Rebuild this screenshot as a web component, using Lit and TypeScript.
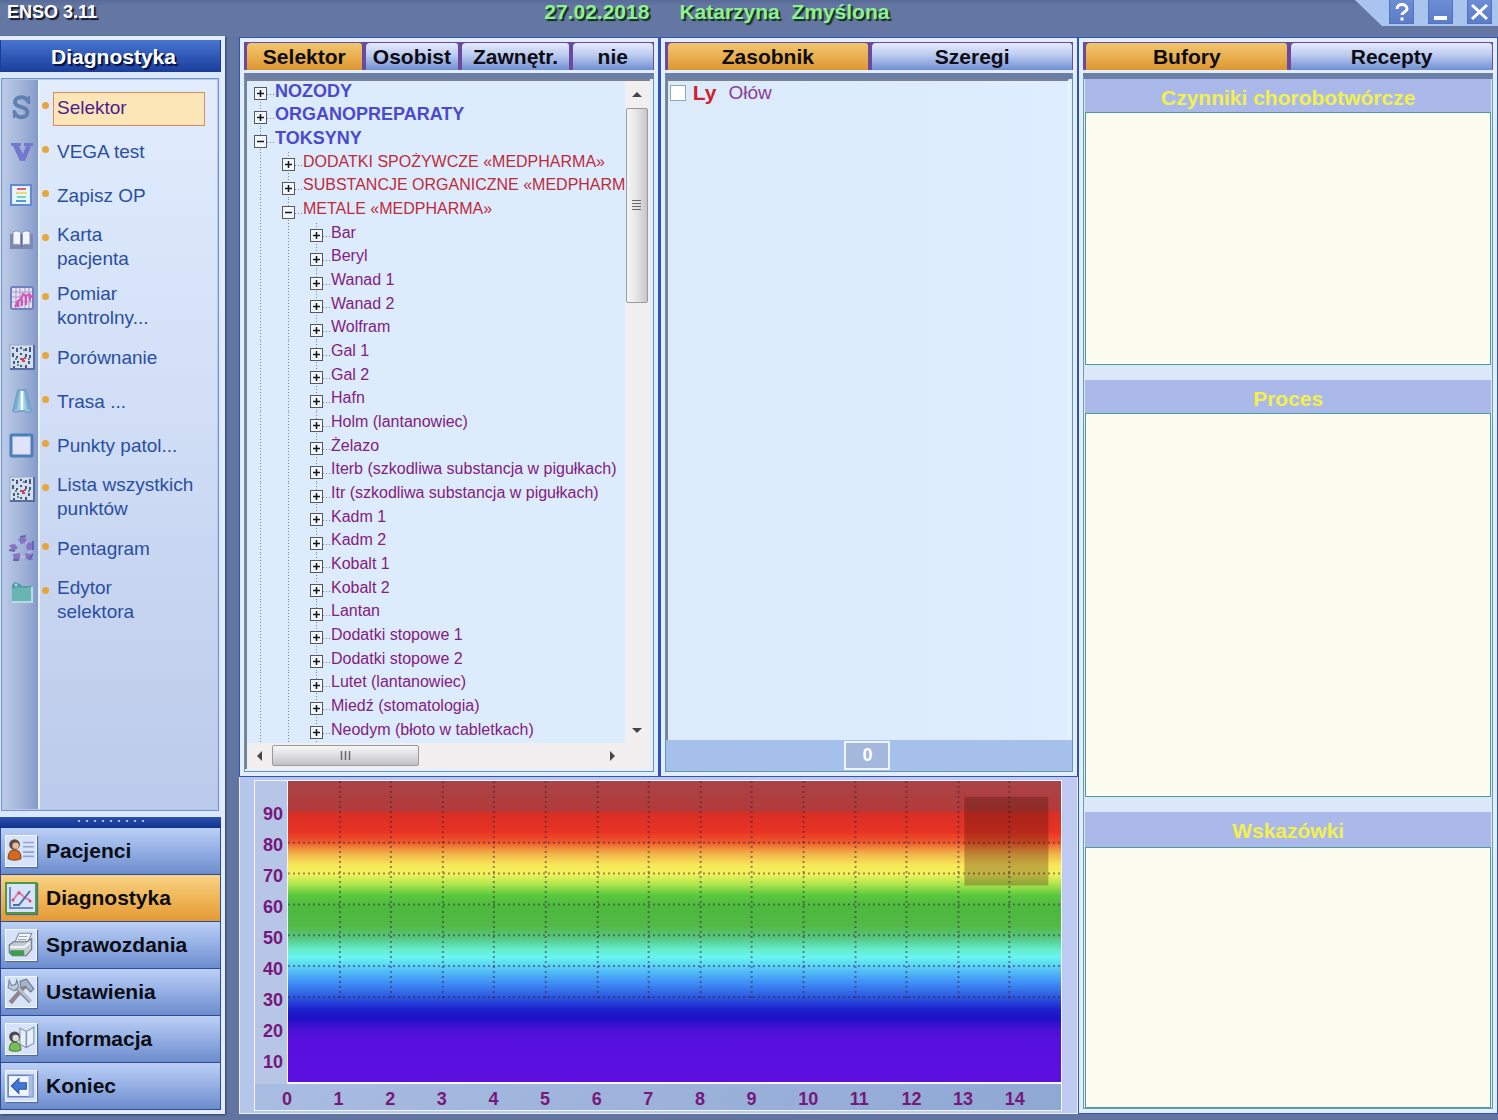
import { LitElement, html, svg, css, nothing } from "lit";
import { customElement, state } from "lit/decorators.js";
import { classMap } from "lit/directives/class-map.js";

/* ---------- icons ---------- */

const dotsIcon = svg`
  <rect x="1" y="1" width="24" height="24" fill="#d3dff0" stroke="#9aaac8"/>
  <path d="M1 25H25V1" fill="none" stroke="#566da0" stroke-width="2"/>
  <path d="M4 3v2M8 4v4M12 3v2M17 4v3M21 3v5M4 9v4M8 12v2M12 9v2M17 10v3M21 11v3M5 17v3M9 17v2M20 17v3M12 21v2M17 21v3M5 22v2" fill="none" stroke="#4a567a" stroke-width="2"/>
  <path d="M11 15h4M13 17h3M15 14h2" stroke="#c04860" stroke-width="2"/>
  <path d="M6 15h2M19 15h2M8 21h2M14 6h2" stroke="#5f8f83" stroke-width="2"/>`;

const toolIcons: Record<string, unknown> = {
  s: svg`<path d="M20 9C18.500 5 16 3.200 12.500 3.200 8.500 3.200 6 5.200 6 8c0 3 2.500 4 6.200 5 3.800 1 6.300 2.200 6.300 5.300 0 3-2.600 4.900-6.200 4.900-3.600 0-6-2-7.300-6.200" fill="none" stroke="#6080b2" stroke-width="4"/>
    <path d="M19 2h2v8h-2zM4 16h2v8H4z" fill="#6080b2"/>`,
  v: svg`<path d="M2 5h10v3h-2l4 8 3-8h-2V5h9v3h-2l-6 15h-5L4 8H2z" fill="#7078cf"/>`,
  list: svg`
    <rect x="2" y="3" width="20" height="20" fill="#e6f4ff" stroke="#6389d6" stroke-width="2"/>
    <path d="M8 7h9" stroke="#dd6464" stroke-width="2"/><path d="M7 11h11" stroke="#e9dc72" stroke-width="2"/>
    <path d="M8 15h9" stroke="#74d6c0" stroke-width="2"/><path d="M7 19h10" stroke="#4d9ecb" stroke-width="2"/>`,
  book: svg`
    <path d="M1 8h3v11h9v4H1zM24 8h-3v11h-8v4h11z" fill="#7f88ae"/>
    <path d="M4 6c3-2 6-1 8 1v13c-2-2-5-2-8-1zM21 6c-3-2-6-1-8 1v13c2-2 5-2 8-1z" fill="#f2f6fc" stroke="#8592b5"/>
    <path d="M12.500 8v13" stroke="#5f6b93" stroke-width="2"/>`,
  chart: svg`
    <rect x="2" y="2" width="22" height="22" rx="2" fill="#e6e2f6" stroke="#7280bd" stroke-width="2"/>
    <path d="M7 3v20M11 3v20M16 3v20M20 3v20M3 7h20M3 12h20M3 17h20" stroke="#a795cd"/>
    <path d="M6 22l3-6 3-2 2-5 3 2 3-2 4 4M9 22v-5M13 21v-7M17 20v-8M21 16v-5" fill="none" stroke="#d452b4" stroke-width="2"/>`,
  dots: dotsIcon,
  road: svg`
    <path d="M9 2h8l5 21c-2 2-5 1-6 0h-6c-2 1-5 1-6 0z" fill="#9fcfe6" stroke="#6a9fc4" stroke-width="1.500"/>
    <path d="M9 3h2L8 22H5zM17 3h-2l3 19h3z" fill="#78aed0"/><path d="M13 3v19" stroke="#fff" stroke-width="2.500"/>`,
  square: svg`<rect x="2" y="3" width="21" height="21" rx="1" fill="#dfe2f8" stroke="#4a7fb8" stroke-width="3"/>`,
  star: svg`
    <circle cx="13" cy="14" r="8" fill="none" stroke="#aebfe6" stroke-width="2"/>
    <g fill="#8a72c2"><path d="M9 4l3 5 4-1 2-4-4-2z"/><path d="M18 8l6-1v6l-4 3-3-3z"/><path d="M16 18l6 1 2 6-7-1z"/><path d="M4 19l7-1v6l-6 2z"/><path d="M0 10l6-1 3 4-5 3z"/></g>
    <path d="M11 2l6-1M24 6v9M20 25l4-6M4 25l6 0M0 15l6 1" stroke="#5b6bb0" stroke-width="2"/>`,
  folder: svg`
    <path d="M3 6l3-3 5 2 2 2h10v16H3z" fill="#4f9aa5"/><path d="M3 10c6-3 12 0 20-2v14H3z" fill="#69b5b4"/>
    <path d="M3 23h20V8" fill="none" stroke="#b4dde8" stroke-width="2"/><circle cx="7" cy="6" r="1.500" fill="#a5d8de"/>`,
};

const navIcons: Record<string, unknown> = {
  people: svg`
    <circle cx="10" cy="10" r="5" fill="#5e4a44"/><circle cx="11" cy="11" r="3" fill="#e9bc98"/>
    <path d="M4 23c0-6 2-8 6-8s6 2 6 8c-3 2-9 2-12 0z" fill="#d2691e" stroke="#8c4a20"/>
    <path d="M18 8h10M18 12h10M18 17h10M18 21h10" stroke="#8fa3cf" stroke-width="1.500"/>`,
  chart: svg`
    <path d="M5 5v21h23" fill="none" stroke="#6e88c8" stroke-width="2"/>
    <path d="M8 18l6-8 6 6 5 2" fill="none" stroke="#df7fa6" stroke-width="2"/>
    <path d="M8 23h6l11-14" fill="none" stroke="#4c6ba8" stroke-width="2"/>
    <g fill="#d44b7c"><circle cx="8" cy="18" r="1.500"/><circle cx="14" cy="11" r="1.500"/><circle cx="25" cy="19" r="1.500"/></g>`,
  printer: svg`
    <path d="M10 14l4-9h12l-4 10z" fill="#f4f7fb" stroke="#7f8a99"/><path d="M14 8h8M13 11h8" stroke="#9aa8b8"/>
    <path d="M5 16l4-3h12l5-3v10l-5 6H8l-3-3z" fill="#c3cad2" stroke="#6c7784"/>
    <path d="M6 21h13v5H8l-2-2z" fill="#3f9c4a"/><path d="M6 18h13l5-4" fill="none" stroke="#eef2f6" stroke-width="2"/>`,
  tools: svg`
    <path d="M6 26L20 10" stroke="#8f8488" stroke-width="4"/><path d="M10 10l15 15" stroke="#b8bec9" stroke-width="4"/>
    <path d="M10 12l14 14" stroke="#6f7b92"/>
    <path d="M15 6l6-2 7 9-3 3-5-5-4 1z" fill="#a9b3c6" stroke="#687590"/>
    <path d="M5 5l2 5 4-1 1-4 2 6-4 4-6-3z" fill="#c3cbd9" stroke="#76839c"/>`,
  info: svg`
    <path d="M15 6l6 3 7-4v15l-7 4-6-3z" fill="#e9eff8" stroke="#8494b5"/><path d="M21 9v15" stroke="#8494b5" stroke-width="1.500"/>
    <circle cx="10" cy="14" r="5" fill="#4a4850"/><circle cx="11" cy="15" r="3" fill="#dfe0d8"/>
    <path d="M5 26c0-5 2-7 5-7s6 2 6 7c-3 2-8 2-11 0z" fill="#7dbb58" stroke="#4d7f3c"/>`,
  exit: svg`
    <rect x="4" y="6" width="23" height="20" fill="#f2f7ff" stroke="#6783bd" stroke-width="1.500"/>
    <path d="M27 6v20h-4V6z" fill="#a8bce3"/>
    <path d="M7 16l7-7v4h7v6h-7v4z" fill="#4377d4" stroke="#2c58ab"/>`,
};

/* ---------- data ---------- */

const tools = [
  { icon: "s", label: "Selektor", active: true },
  { icon: "v", label: "VEGA test" },
  { icon: "list", label: "Zapisz OP" },
  { icon: "book", label: "Karta pacjenta", narrow: true },
  { icon: "chart", label: "Pomiar kontrolny...", narrow: true },
  { icon: "dots", label: "Porównanie" },
  { icon: "road", label: "Trasa ..." },
  { icon: "square", label: "Punkty patol..." },
  { icon: "dots", label: "Lista wszystkich punktów" },
  { icon: "star", label: "Pentagram" },
  { icon: "folder", label: "Edytor selektora", narrow: true },
];

const sections = [
  { icon: "people", label: "Pacjenci" },
  { icon: "chart", label: "Diagnostyka" },
  { icon: "printer", label: "Sprawozdania" },
  { icon: "tools", label: "Ustawienia" },
  { icon: "info", label: "Informacja" },
  { icon: "exit", label: "Koniec" },
];

type Row = { level: number; label: string; open?: boolean };
const metals = [
  "Bar", "Beryl", "Wanad 1", "Wanad 2", "Wolfram", "Gal 1", "Gal 2", "Hafn", "Holm (lantanowiec)", "Żelazo",
  "Iterb (szkodliwa substancja w pigułkach)", "Itr (szkodliwa substancja w pigułkach)", "Kadm 1", "Kadm 2",
  "Kobalt 1", "Kobalt 2", "Lantan", "Dodatki stopowe 1", "Dodatki stopowe 2", "Lutet (lantanowiec)",
  "Miedź (stomatologia)", "Neodym (błoto w tabletkach)",
];
const rows: Row[] = [
  { level: 0, label: "NOZODY" },
  { level: 0, label: "ORGANOPREPARATY" },
  { level: 0, label: "TOKSYNY", open: true },
  { level: 1, label: "DODATKI SPOŻYWCZE «MEDPHARMA»" },
  { level: 1, label: "SUBSTANCJE ORGANICZNE «MEDPHARMA»" },
  { level: 1, label: "METALE «MEDPHARMA»", open: true },
  ...metals.map((label) => ({ level: 2, label })),
];

const range = (n: number) => Array.from({ length: n }, (_, i) => i);

/* ---------- tab strip ---------- */

@customElement("tab-strip")
class TabStrip extends LitElement {
  static properties = { tabs: { attribute: false }, active: { state: true } };
  declare tabs: string[];
  declare active: number;
  constructor() {
    super();
    this.tabs = [];
    this.active = 0;
  }
  static styles = css`
    :host { display: block; }
    .strip { display: grid; grid-template-columns: 115fr 93fr 107fr 80fr; height: 28px; background: #6a4a9c; gap: 4px; padding: 1px 1px 0 3px; box-sizing: border-box; }
    .wide { grid-template-columns: 1fr 1fr; }
    .tab {
      min-width: 0; padding: 0; border: 0; border-radius: 4px 3px 0 0; white-space: nowrap;
      font: bold 21px/27px "Liberation Sans", Arial, sans-serif; color: #0c0c12;
      background: linear-gradient(#e6eafb, #bccbf0 45%, #6f8fd4);
    }
    .on { background: linear-gradient(#f0c66e, #e9b050 50%, #dc9632); }
  `;
  render() {
    return html`<div class=${classMap({ strip: true, wide: this.tabs.length === 2 })} role="tablist">
      ${this.tabs.map((t, i) => html`<button role="tab" aria-selected=${i === this.active}
        class=${classMap({ tab: true, on: i === this.active })} @click=${() => (this.active = i)}>${t}</button>`)}
    </div>`;
  }
}

/* ---------- substance tree ---------- */

@customElement("substance-tree")
class SubstanceTree extends LitElement {
  static styles = css`
    :host { display: grid; grid-template: minmax(0, 1fr) 26px / minmax(0, 1fr) 25px; background: #f1eff0;
      border: 0 solid #7b828e; border-width: 2px 0 0 2px; min-height: 0;
      font: 16px/20px "Liberation Sans", Arial, sans-serif; }
    .rows { margin: 0; padding: 0; list-style: none; display: grid; grid-auto-rows: minmax(0, 1fr); overflow: hidden; background: #ddecfc; }
    .row { display: flex; align-items: center; white-space: nowrap; color: #82207f; }
    .text { padding-bottom: 4px; }
    .guide { flex: none; width: 28px; align-self: stretch; display: flex; align-items: center;
      background: repeating-linear-gradient(#7d8593 0 1px, transparent 1px 3px) 13px 0 / 1px 100% no-repeat; }
    .start { background-position: 13px 12px; }
    .branch { width: 28px; display: flex; padding: 2px 0 0 7px; box-sizing: border-box;
      background: repeating-linear-gradient(90deg, #7d8593 0 1px, transparent 1px 3px) 20px 9px / 8px 1px no-repeat; }
    .toggle { width: 13px; height: 13px; padding: 0; border: 1px solid #55575f; background: #f3f8ff; display: block; }
    .toggle svg { display: block; width: 11px; height: 11px; }
    .l0 { color: #4b49cf; font-weight: bold; font-size: 18px; }
    .l1 { color: #bd2a3c; }
    .vbar, .hbar { display: flex; align-items: center; background: #f1eff0; }
    .vbar { flex-direction: column; }
    .hbar { grid-column: 1 / -1; padding-right: 25px; }
    .arrow { flex: none; width: 25px; height: 27px; border: 0; padding: 0; background: none; }
    .arrow svg { display: block; margin: auto; }
    .track { flex: 1; align-self: stretch; display: flex; }
    .vbar .track { flex-direction: column; }
    .thumb { box-sizing: border-box; border: 1px solid #9a9a9c; border-radius: 2px; display: flex; align-items: center; justify-content: center; }
    .vbar .thumb { height: 32%; background: linear-gradient(90deg, #f6f6f6, #e4e4e6 50%, #c6c6ca); margin: 0 2px 0 1px; }
    .hbar .thumb { width: 45%; background: linear-gradient(#f6f6f6, #dededf 50%, #c2c2c6); margin: 2px 0 3px; }
  `;
  private glyph(open?: boolean) {
    return html`<svg viewBox="0 0 11 11"><path d=${open ? "M2 5.500h7" : "M2 5.500h7M5.500 2v7"} stroke="#15151c" stroke-width="1.500"/></svg>`;
  }
  private arrow(d: string, label: string) {
    return html`<button class="arrow" aria-label=${label}><svg width="10" height="10" viewBox="0 0 10 10"><path d=${d} fill="#44464c"/></svg></button>`;
  }
  render() {
    return html`
      <ul class="rows" role="tree">
        ${rows.map((r, i) => html`<li class="row l${r.level}" role="treeitem" aria-level=${r.level + 1}>
          ${range(r.level).map(() => html`<span class="guide"></span>`)}
          <span class=${classMap({ guide: true, start: i === 0 })}><span class="branch">
            <button class="toggle" aria-label=${r.open ? "Zwiń" : "Rozwiń"}>${this.glyph(r.open)}</button>
          </span></span><span class="text">${r.label}</span></li>`)}
      </ul>
      <div class="vbar">
        ${this.arrow("M0 7L5 2l5 5z", "W górę")}
        <div class="track"><div class="thumb"><svg width="9" height="12"><path d="M0 1.500h9M0 4.500h9M0 7.500h9M0 10.500h9" stroke="#66686e"/></svg></div></div>
        ${this.arrow("M0 3l5 5 5-5z", "W dół")}
      </div>
      <div class="hbar">
        ${this.arrow("M7 0L2 5l5 5z", "W lewo")}
        <div class="track"><div class="thumb"><svg width="12" height="9"><path d="M1.500 0v9M5.500 0v9M9.500 0v9" stroke="#66686e" stroke-width="1.500"/></svg></div></div>
        ${this.arrow("M3 0l5 5-5 5z", "W prawo")}
      </div>`;
  }
}

/* ---------- spectrum chart ---------- */

@customElement("spectrum-chart")
class SpectrumChart extends LitElement {
  static styles = css`
    :host { display: block; background: linear-gradient(90deg, #b6c6ea, #bfcaf0); border: 1px solid #e8f0ff; border-top: 0;
      padding: 3px 15px 2px 14px; min-height: 0; font: bold 18px/24px "Liberation Sans", Arial, sans-serif; color: #76187c; }
    .frame { box-sizing: border-box; height: 100%; display: grid; grid-template: minmax(0, 1fr) 26px / 32px minmax(0, 1fr);
      border: 1px solid #f2f7ff; background: linear-gradient(135deg, #b4c4e6, #8ea8d4); }
    .ylabels { display: grid; grid-auto-rows: minmax(0, 1fr); align-items: center; justify-items: end; padding: 17px 4px 6px 0; background: #b7c6e6; }
    .plot { min-height: 0; border: 0 solid #f6f4ff; border-width: 0 0 2px 1px;
      background: linear-gradient(#a94446 0, #b33a3a 9.500%, #d92f25 11%, #e83424 17%, #ee5a2c 20.500%, #f2b148 24%, #f8e85a 28%, #f2f25c 31%,
        #b4e64e 34%, #5ac83e 38%, #4cb93e 42%, #52b945 48%, #56c67e 52%, #64eccb 56%, #68f5ef 58.500%, #58ccf6 62%, #3f8ff6 67%,
        #2b55de 72%, #1d20cc 76%, #1f10c6 79%, #4410d2 82%, #5810de 86%, #5c10e0 100%); }
    .plot svg { display: block; width: 100%; height: 100%; }
    .xlabels { grid-column: 1 / -1; display: grid; grid-template-columns: repeat(15, minmax(0, 1fr)); padding: 4px 5px 0 27px; line-height: 22px; }
  `;
  render() {
    return html`<div class="frame">
      <div class="ylabels">${range(9).map((i) => html`<span>${90 - i * 10}</span>`)}</div>
      <div class="plot">
        <svg viewBox="0 0 774 302" preserveAspectRatio="none">
          <g stroke="#3b2040" stroke-opacity=".5" stroke-width="2" stroke-dasharray="2 3" fill="none">
            ${range(14).map((i) => svg`<path d="M${Math.round(51.6 * (i + 1))} 0V220" vector-effect="non-scaling-stroke"/>`)}
            ${range(6).map((i) => svg`<path d="M0 ${62 + i * 31}H774" vector-effect="non-scaling-stroke"/>`)}
          </g>
          <rect x="677" y="16" width="84" height="89" fill="#3a0c00" fill-opacity=".28"/>
        </svg>
      </div>
      <div class="xlabels">${range(15).map((i) => html`<span>${i}</span>`)}</div>
    </div>`;
  }
}

/* ---------- application ---------- */

@customElement("app-root")
class AppRoot extends LitElement {
  @state() private section = 1;

  static styles = css`
    :host { display: grid; grid-template: 37px minmax(0, 1fr) / 239px minmax(0, 2fr) minmax(0, 1fr); min-height: 100vh; height: 100vh;
      box-sizing: border-box; padding-bottom: 6px; background: #6275a1; overflow: hidden;
      font: 19px/24px "Liberation Sans", Arial, sans-serif; }
    .title { grid-column: 1 / -1; display: grid; grid-template-columns: 36% minmax(0, 1fr) auto; font-weight: bold; line-height: 24px;
      background: linear-gradient(#586a96, #6477a2 6px); }
    .name { margin: 0; padding-left: 7px; font-size: 18px; line-height: 24px; color: #fff; text-shadow: 2px 2px 1px #14182a; }
    .patient { display: flex; gap: 30px; padding-left: 5px; font-size: 21px; color: #8ff08f; text-shadow: 2px 2px 1px #10301c; }
    .window { display: flex; gap: 14px; height: 26px; box-sizing: border-box; padding: 0 6px 0 34px; background: #a9c5ef;
      clip-path: polygon(0 0, 100% 0, 100% 100%, 27px 100%); }
    .winbtn { width: 25px; height: 24px; padding: 0; border: 1px solid #5573bd; border-top: 0; background: linear-gradient(#6c8cd4, #5c7cc8); }
    .winbtn svg { display: block; margin: auto; }

    .side { display: flex; flex-direction: column; box-sizing: border-box; border: 0 solid #e3edfc; border-width: 4px 4px 4px 0; background: #dbe8fb; box-shadow: 1px 1px 2px #2e3f68; margin: -1px 14px 0 0; min-height: 0; }
    .sidehead { margin: 0; height: 32px; flex: none; box-sizing: border-box; padding: 1px 4px 0 10px; text-align: center; font-size: 21px; line-height: 31px; color: #fff; text-shadow: 2px 2px 1px #081040;
      background: linear-gradient(#4a76cf, #2f5ab8 50%, #1d3f9c); border: 1px solid #1d3c94; border-top: 0; }
    .tools { flex: 1; min-height: 0; margin: 7px 3px 7px 2px; border: 1px solid #b3c8ee; outline: 1px solid #7593cf;
      background: linear-gradient(90deg, #bac9e6, #a6b7da 16px, #8fa3cf 30px, #829ac8 35px, #e8f1fe 35px 37px, transparent 37px), linear-gradient(#e1edfd, #d3e0f7 40%, #bccaeb); }
    .list { list-style: none; margin: 0; padding: 7px 0 0; }
    .tool { display: grid; grid-template-columns: 36px 14px 152px; min-height: 44px; text-decoration: none; color: #2b4fa0; }
    .tool svg { width: 26px; height: 26px; margin: 7px 0 0 6px; }
    .dot { width: 7px; height: 7px; border-radius: 50%; background: #e8a53c; margin: 15px 0 0 3px; }
    .label { align-self: center; justify-self: stretch; padding: 3px 0 6px 3px; box-sizing: border-box; border: 1px solid transparent; }
    .narrow .label { padding-right: 50px; }
    .active .label { background: #fce6b8; border-color: #d98b62; color: #4a1f8c; padding-bottom: 5px; }
    .splitter { flex: none; height: 11px; background: linear-gradient(#2c52ae, #12328f); display: flex; justify-content: center; gap: 6px; padding-top: 3px; box-sizing: border-box; }
    .grip { width: 2px; height: 2px; background: #a9bfee; }
    .nav { display: flex; flex-direction: column; background: #2b4c9c; gap: 1px; padding: 0 1px 1px; }
    .navbtn { display: flex; align-items: center; gap: 9px; height: 46px; padding: 0 0 0 4px; border: 0; text-align: left; color: #0b0d14;
      font: bold 21px/24px "Liberation Sans", Arial, sans-serif; background: linear-gradient(#bcd0f5, #93afe4 50%, #6d8ccd); }
    .navbtn svg { box-sizing: border-box; width: 32px; height: 32px; border: 1px solid #f2f7ff; background: #d6e3f9; box-shadow: 1px 1px 1px #50699f; }
    .current { background: linear-gradient(#f8d387, #f0b658 50%, #e49a34); }
    .current svg { border: 2px solid #4d9a42; }

    .main { display: grid; grid-template: minmax(0, 11fr) minmax(0, 5fr) / minmax(0, 1fr) minmax(0, 1fr); min-height: 0; }
    spectrum-chart { grid-column: 1 / -1; }
    .panel { display: flex; flex-direction: column; box-sizing: border-box; border: 1px solid #2f54bd; padding: 4px; background: #e2eefd; min-height: 0; min-width: 0; }
    .panel + .panel { border-left-width: 2px; }
    .field { flex: 1; min-height: 0; margin-top: 3px; display: flex; flex-direction: column; border: 1px solid #6695ad; border-top: 6px solid #6b7ea8; }
    .inset { margin-right: 3px; margin-bottom: 2px; }
    .field > substance-tree { flex: 1; }
    .stock { flex: 1; border: 0 solid #7b828e; border-width: 2px 0 0 2px; background: linear-gradient(90deg, #dcebfa, #deedff); margin-right: 3px; border-right: 1px solid #f4f9ff; }
    .pick { display: flex; align-items: center; gap: 6px; color: #8a3c98; padding-left: 2px; }
    .pick input { appearance: none; width: 16px; height: 16px; margin: 0 1px 0 0; border: 1px solid #8fa9b8; background: #fff; }
    .pick b { color: #cf1f30; font-size: 21px; margin-right: 6px; }
    .total { height: 31px; display: flex; justify-content: center; background: #a6c0ec; box-sizing: border-box; padding: 1px 3px 1px 0; }
    .total output { width: 46px; box-sizing: border-box; border: 2px solid #eef5ff; background: #a3b8dc; color: #fff; font: bold 18px/25px "Liberation Sans", Arial, sans-serif; text-align: center; }

    .right .field { display: grid; grid-template-rows: 33px minmax(0, 253fr) 48px minmax(0, 385fr) 50px minmax(0, 261fr); border-color: #6b7ea8 #6aa0a4 #6aa0a4; padding: 0 1px; background: #dce8fa; }
    .caption { margin: 0; font-size: 21px; line-height: 37px; text-align: center; color: #f1f04e; background: #abb9ea; }
    .caption + .buffer + .caption { margin-top: 15px; }
    .buffer { border: 1px solid #4d9c98; background: #fcfcf0; }
  `;

  private panelTabs(tabs: string[]) {
    return html`<tab-strip .tabs=${tabs}></tab-strip>`;
  }

  render() {
    return html`
      <header class="title">
        <h1 class="name">ENSO 3.11</h1>
        <div class="patient"><span>27.02.2018</span><span>Katarzyna&nbsp; Zmyślona</span></div>
        <div class="window">
          <button class="winbtn" aria-label="Pomoc"><svg width="19" height="20" viewBox="0 0 19 20"><path d="M5 7c0-6 10-6 10 0 0 3-5 3-5 6M10 15.500v3" fill="none" stroke="#fff" stroke-width="3"/></svg></button>
          <button class="winbtn" aria-label="Minimalizuj"><svg width="19" height="20" viewBox="0 0 19 20"><path d="M3 16h13" stroke="#fff" stroke-width="4"/></svg></button>
          <button class="winbtn" aria-label="Zamknij"><svg width="19" height="20" viewBox="0 0 19 20"><path d="M2 3l15 14M17 3L2 17" stroke="#fff" stroke-width="3"/></svg></button>
        </div>
      </header>

      <aside class="side">
        <h2 class="sidehead">Diagnostyka</h2>
        <div class="tools"><ul class="list">
          ${tools.map((t) => html`<li><a href="#" class=${classMap({ tool: true, active: !!t.active, narrow: !!t.narrow })}>
            <svg viewBox="0 0 26 26">${toolIcons[t.icon]}</svg><span class="dot"></span><span class="label">${t.label}</span></a></li>`)}
        </ul></div>
        <div class="splitter">${range(9).map(() => html`<span class="grip"></span>`)}</div>
        <nav class="nav">
          ${sections.map((s, i) => html`<button class=${classMap({ navbtn: true, current: i === this.section })}
            aria-current=${i === this.section ? "page" : nothing} @click=${() => (this.section = i)}>
            <svg viewBox="2 2 28 28">${navIcons[s.icon]}</svg>${s.label}</button>`)}
        </nav>
      </aside>

      <main class="main">
        <section class="panel">
          ${this.panelTabs(["Selektor", "Osobist", "Zawnętr.", "nie"])}
          <div class="field"><substance-tree class="inset"></substance-tree></div>
        </section>
        <section class="panel">
          ${this.panelTabs(["Zasobnik", "Szeregi"])}
          <div class="field">
            <div class="stock"><label class="pick"><input type="checkbox"><b>Ly</b>Ołów</label></div>
            <div class="total"><output>0</output></div>
          </div>
        </section>
        <spectrum-chart></spectrum-chart>
      </main>

      <section class="panel right">
        ${this.panelTabs(["Bufory", "Recepty"])}
        <div class="field">
          <h3 class="caption">Czynniki chorobotwórcze</h3><div class="buffer"></div>
          <h3 class="caption">Proces</h3><div class="buffer"></div>
          <h3 class="caption">Wskazówki</h3><div class="buffer"></div>
        </div>
      </section>`;
  }
}
